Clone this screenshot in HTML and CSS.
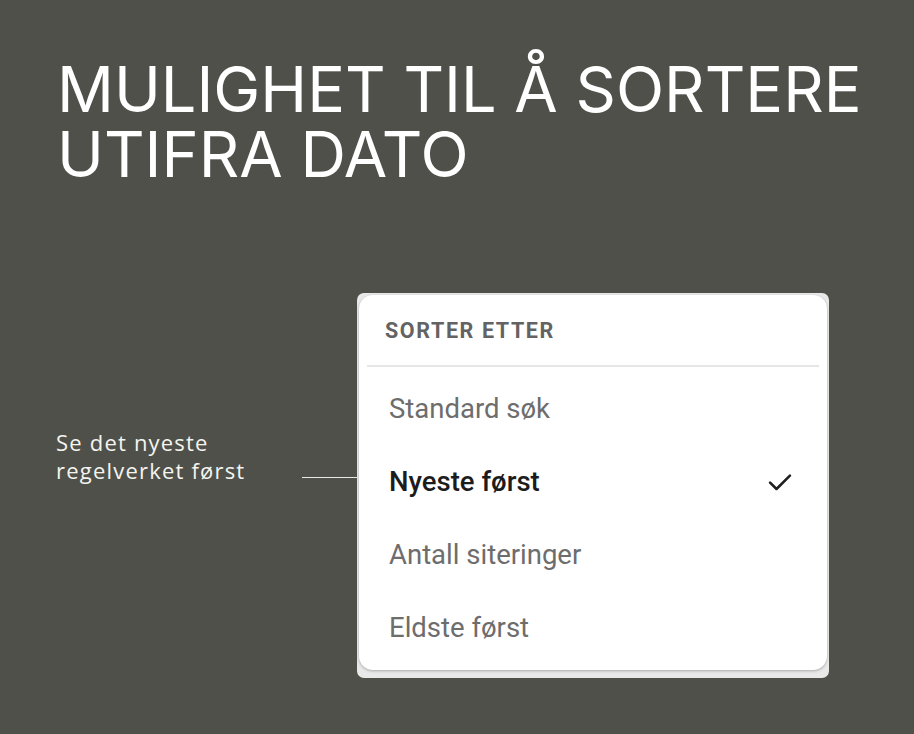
FILE: index.html
```html
<!DOCTYPE html>
<html lang="no">
<head>
<meta charset="utf-8">
<title>Mulighet til å sortere utifra dato</title>
<link rel="stylesheet" href="styles.css">
</head>
<body>
<main class="page">
  <h1 class="title">MULIGHET TIL Å SORTERE<br>UTIFRA DATO</h1>
  <section class="stage">
    <div class="note">
      <p class="note-text">Se det nyeste<br>regelverket først</p>
      <span class="connector"></span>
    </div>
    <div class="shot">
      <div class="menu">
        <div class="menu-head">SORTER ETTER</div>
        <ul class="menu-list">
          <li class="item">Standard søk</li>
          <li class="item active">Nyeste først
            <svg class="check" viewBox="0 0 24 24" width="28" height="28"><path d="M3.5 12.5 L9 18 L20.5 6.5" fill="none" stroke="#1f1f1f" stroke-width="2.2" stroke-linecap="round" stroke-linejoin="round"/></svg>
          </li>
          <li class="item">Antall siteringer</li>
          <li class="item">Eldste først</li>
        </ul>
      </div>
    </div>
  </section>
</main>
</body>
</html>
```
FILE: styles.css
```css
html, body {
  margin: 0;
  padding: 0;
}
body {
  background: #4f5049;
  width: 914px;
  height: 734px;
  overflow: hidden;
  font-family: Inter, "Noto Sans", sans-serif;
}
.page {
  padding: 57px 0 0 57px;
}
.title {
  margin: 0;
  color: #ffffff;
  font-family: Inter, "Noto Sans", sans-serif;
  font-weight: 400;
  font-size: 63px;
  line-height: 65px;
  letter-spacing: 0;
}
.stage {
  display: flex;
  margin-top: 106px;
  margin-left: -1px;
}
.note {
  width: 301px;
  padding-top: 135px;
}
.note-text {
  margin: 0;
  color: #f4f4f0;
  font-family: "Open Sans", sans-serif;
  font-size: 22px;
  line-height: 28px;
  letter-spacing: 1.2px;
}
.connector {
  display: block;
  width: 55px;
  height: 1px;
  background: #e8e8e8;
  margin: -7px 0 0 246px;
}
.shot {
  width: 472px;
  height: 385px;
  background: #e9e9ea;
  border-radius: 7px;
  padding: 2px 2px 8px 2px;
  box-sizing: border-box;
}
.menu {
  height: 100%;
  background: #ffffff;
  border-radius: 14px;
  box-shadow: 0 1px 3px rgba(0,0,0,0.28);
  padding: 0 8px;
  box-sizing: border-box;
}
.menu-head {
  padding: 23px 0 0 18px;
  height: 47px;
  border-bottom: 2px solid #e6e6e6;
  color: #636363;
  font-family: Roboto, sans-serif;
  font-weight: 700;
  font-size: 21.5px;
  letter-spacing: 1.6px;
}
.menu-list {
  list-style: none;
  margin: 0;
  padding: 5px 0 0 0;
}
.item {
  display: flex;
  align-items: center;
  justify-content: space-between;
  height: 73px;
  padding: 0 25px 0 22px;
  color: #6d6d6d;
  font-family: Roboto, sans-serif;
  font-size: 27.5px;
}
.item.active {
  color: #1c1c1c;
  font-weight: 500;
}
.check {
  display: block;
}
```
